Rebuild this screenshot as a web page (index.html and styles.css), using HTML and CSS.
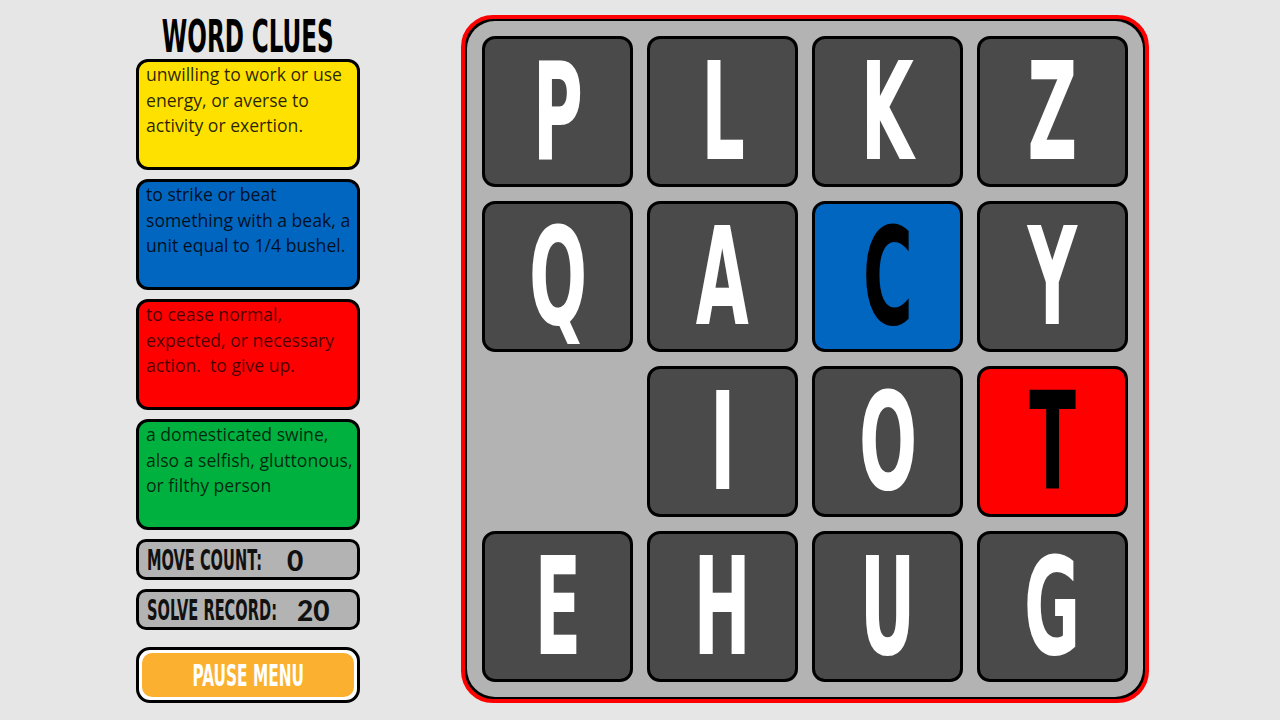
FILE: index.html
```html
<!DOCTYPE html>
<html>
<head>
<meta charset="utf-8">
<link rel="stylesheet" href="styles.css">
</head>
<body>
<div class="page">
  <aside class="side">
    <h1 class="title"><span class="cond">WORD CLUES</span></h1>
    <div class="clue yellow">unwilling to work or use energy, or averse to activity or exertion.</div>
    <div class="clue blue">to strike or beat something with a beak, a unit equal to 1/4 bushel.</div>
    <div class="clue red">to cease normal, expected, or necessary action.&nbsp; to give up.</div>
    <div class="clue green">a domesticated swine, also a selfish, gluttonous, or filthy person</div>
    <div class="stat"><span class="label"><span class="cond">MOVE COUNT:</span></span><span class="value">0</span></div>
    <div class="stat stat2"><span class="label"><span class="cond">SOLVE RECORD:</span></span><span class="value">20</span></div>
    <div class="pause"><div class="pause-inner"><span class="cond">PAUSE MENU</span></div></div>
  </aside>
  <main class="board">
    <div class="grid">
      <div class="tile"><span class="cond">P</span></div>
      <div class="tile"><span class="cond">L</span></div>
      <div class="tile"><span class="cond">K</span></div>
      <div class="tile"><span class="cond">Z</span></div>
      <div class="tile"><span class="cond">Q</span></div>
      <div class="tile"><span class="cond">A</span></div>
      <div class="tile t-blue"><span class="cond">C</span></div>
      <div class="tile"><span class="cond">Y</span></div>
      <div class="empty"></div>
      <div class="tile"><span class="cond">I</span></div>
      <div class="tile"><span class="cond">O</span></div>
      <div class="tile t-red"><span class="cond">T</span></div>
      <div class="tile"><span class="cond">E</span></div>
      <div class="tile"><span class="cond">H</span></div>
      <div class="tile"><span class="cond">U</span></div>
      <div class="tile"><span class="cond">G</span></div>
    </div>
  </main>
</div>
</body>
</html>
```
FILE: styles.css
```css
html, body {
  margin: 0;
  padding: 0;
}
body {
  background: #e6e6e6;
  width: 1280px;
  height: 720px;
  overflow: hidden;
  font-family: "Open Sans", "Noto Sans", sans-serif;
}
.page {
  display: flex;
  padding: 15px 0 0 136px;
  gap: 101px;
}
.side {
  width: 224px;
  display: flex;
  flex-direction: column;
}
.cond {
  display: inline-block;
  font-family: "DejaVu Sans", sans-serif;
  font-stretch: condensed;
  font-weight: bold;
  transform: scaleX(0.66);
  white-space: nowrap;
}
.title {
  margin: 0;
  height: 44px;
  display: flex;
  justify-content: center;
  align-items: center;
  font-size: 45px;
  line-height: 44px;
  color: #000;
  font-weight: bold;
}
.title .cond {
  transform: scaleX(0.57);
}
.clue {
  box-sizing: border-box;
  height: 111px;
  margin-bottom: 9px;
  border: 3px solid #000;
  border-radius: 12px;
  padding: 0 2px 0 7px;
  font-size: 17.6px;
  line-height: 25.5px;
  color: rgba(0, 0, 0, 0.85);
}
.yellow { background: #ffe100; }
.blue { background: #0066c0; }
.red { background: #ff0000; color: rgba(0,0,0,0.72); }
.green { background: #00b140; color: rgba(0,0,0,0.78); }
.stat {
  box-sizing: border-box;
  height: 41px;
  margin-bottom: 9px;
  border: 3px solid #000;
  border-radius: 10px;
  background: #b3b3b3;
  display: flex;
  align-items: center;
  padding-left: 8px;
}
.stat2 { margin-bottom: 17px; }
.label {
  font-size: 29px;
  line-height: 30px;
  color: #111;
  display: inline-block;
}
.label .cond {
  transform-origin: left center;
  transform: scaleX(0.56);
}
.stat .label { width: 140px; }
.stat2 .label { width: 150px; }
.value {
  font-family: "Lato", sans-serif;
  font-weight: 900;
  font-size: 28px;
  color: #111;
}
.pause {
  box-sizing: border-box;
  height: 56px;
  border: 3px solid #000;
  border-radius: 14px;
  background: #fff;
  padding: 3px;
}
.pause-inner {
  height: 100%;
  border-radius: 10px;
  background: #fbb12f;
  display: flex;
  align-items: center;
  justify-content: center;
  color: #fff;
  font-size: 31px;
}
.pause-inner .cond {
  transform: scaleX(0.55);
}
.board {
  box-sizing: border-box;
  width: 688px;
  height: 688px;
  border: 4px solid #ff0000;
  border-radius: 32px;
  background: #000;
  padding: 2px;
}
.grid {
  box-sizing: border-box;
  height: 100%;
  border-radius: 28px;
  background: #b3b3b3;
  padding: 15px;
  display: grid;
  grid-template-columns: repeat(4, 151px);
  grid-template-rows: repeat(4, 151px);
  gap: 14px;
}
.tile {
  box-sizing: border-box;
  border: 3px solid #000;
  border-radius: 13px;
  background: #4a4a4a;
  display: flex;
  align-items: center;
  justify-content: center;
  color: #fff;
  font-size: 136px;
  line-height: 1;
}
.tile .cond {
  transform: scaleX(0.56);
}
.t-blue { background: #0066c0; color: #000; }
.t-red { background: #ff0000; color: #000; }
```
